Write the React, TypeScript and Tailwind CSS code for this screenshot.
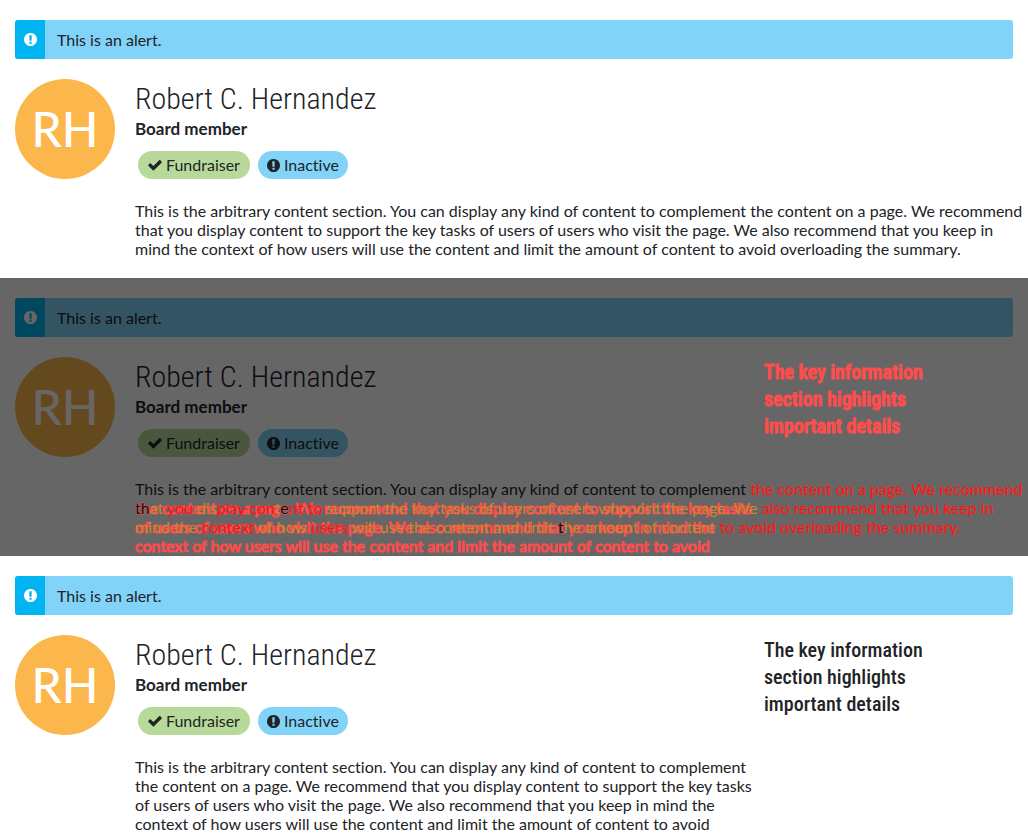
import type { ReactNode } from "react";

const wideLines = [
  "This is the arbitrary content section. You can display any kind of content to complement the content on a page. We recommend",
  "that you display content to support the key tasks of users of users who visit the page. We also recommend that you keep in",
  "mind the context of how users will use the content and limit the amount of content to avoid overloading the summary.",
];

const narrowLines = [
  "This is the arbitrary content section. You can display any kind of content to complement",
  "the content on a page. We recommend that you display content to support the key tasks",
  "of users of users who visit the page. We also recommend that you keep in mind the",
  "context of how users will use the content and limit the amount of content to avoid",
];

type Tone = "base" | "mixed" | "changed";
type Segment = [Tone, string];

const toneClass: Record<Tone, string> = {
  base: "text-[#0d0e10]",
  mixed: "text-[#d08530]",
  changed: "text-[#ee1414] [text-shadow:0_0_1px_#ff4d4d]",
};

const changedLines: Segment[][] = [
  [
    ["base", "This is the arbitrary content section. You can display any kind of content to complement "],
    ["changed", "the content on a page. We recommend"],
  ],
  [
    ["base", "th"],
    ["mixed", "at "],
    ["changed", "you "],
    ["mixed", "dis"],
    ["changed", "play con"],
    ["mixed", "t"],
    ["base", "e"],
    ["changed", "nt to "],
    ["mixed", "support the key tasks of users of users who visit the page. We"],
    ["changed", " also recommend that you keep in"],
  ],
  [
    ["mixed", "mind the "],
    ["changed", "context "],
    ["mixed", "of how "],
    ["changed", "users "],
    ["mixed", "will use the content and limit "],
    ["base", "t"],
    ["mixed", "he amount of content"],
    ["changed", " to avoid overloading the summary."],
  ],
];

function CheckIcon() {
  return (
    <svg viewBox="96 128 1600 1536" className="size-[14px]" fill="currentColor" aria-hidden="true">
      <path d="M1671 566q0 40-28 68l-724 724-136 136q-28 28-68 28t-68-28l-136-136-362-362q-28-28-28-68t28-68l136-136q28-28 68-28t68 28l294 295 656-657q28-28 68-28t68 28l136 136q28 28 28 68z" />
    </svg>
  );
}

function AlertIcon() {
  return (
    <svg viewBox="128 128 1536 1536" className="size-[13px]" fill="currentColor" aria-hidden="true">
      <path d="M896 128q209 0 385.500 103t279.500 279.500 103 385.500-103 385.500-279.500 279.500-385.500 103-385.500-103-279.500-279.500-103-385.500 103-385.500 279.500-279.500 385.500-103zm128 1247v-190q0-14-9-23.500t-22-9.500h-192q-13 0-23 10t-10 23v190q0 13 10 23t23 10h192q13 0 22-9.500t9-23.500zm-2-344l18-621q0-12-10-18-10-8-24-8h-220q-14 0-24 8-10 6-10 18l17 621q0 10 10 17.500t24 7.500h185q14 0 23.500-7.500t10.500-17.500z" />
    </svg>
  );
}

function Lines({ lines }: { lines: string[] }) {
  return (
    <p>
      {lines.map((line) => (
        <span key={line} className="block whitespace-nowrap">
          {line}{" "}
        </span>
      ))}
    </p>
  );
}

function KeyInfo({ changed = false }: { changed?: boolean }) {
  return (
    <aside className="relative z-10 w-[249px] shrink-0 pt-0.5">
      <p
        className={
          changed
            ? "max-w-44 font-['Roboto_Condensed','Liberation_Sans',sans-serif] text-xl leading-[27px] font-medium text-[#ff4d4d] [-webkit-text-stroke:1px_#ff4d4d]"
            : "max-w-44 font-['Roboto_Condensed','Liberation_Sans',sans-serif] text-xl leading-[27px] font-medium"
        }
      >
        The key information section highlights important details
      </p>
    </aside>
  );
}

function ChangedBody() {
  return (
    <div className="grid">
      <p className="col-start-1 row-start-1 pt-[19px] text-[#ff4d4d] [-webkit-text-stroke:1px_#ff4d4d]">
        {narrowLines.slice(1).map((line) => (
          <span key={line} className="block whitespace-nowrap">
            {line}
          </span>
        ))}
      </p>
      <p className="z-10 col-start-1 row-start-1">
        {changedLines.map((segments, row) => (
          <span key={row} className="block whitespace-nowrap">
            {segments.map(([tone, text], i) => (
              <span key={i} className={toneClass[tone]}>
                {text}
              </span>
            ))}
          </span>
        ))}
      </p>
    </div>
  );
}

interface SummaryProps {
  body: ReactNode;
  aside?: ReactNode;
  shaded?: boolean;
}

function Summary({ body, aside, shaded = false }: SummaryProps) {
  return (
    <section className={shaded ? "relative px-[15px] pt-5 pb-px" : aside ? "px-[15px] pt-5" : "px-[15px] pt-5 pb-5"}>
      {shaded && <div className="absolute inset-0 z-10 bg-black/60" />}
      <div role="status" className="mb-5 flex h-[39px] overflow-hidden rounded-[3px] bg-[#81d4f7]">
        <span className="flex w-[30px] items-center justify-center bg-[#00b4f1] text-white">
          <AlertIcon />
        </span>
        <span className="px-3 leading-[39px]">This is an alert.</span>
      </div>
      <div className="flex">
        <div className="flex min-w-0 flex-1 gap-5">
          <div className="flex size-[100px] shrink-0 items-center justify-center rounded-full bg-[#fbb74c] text-[48px] leading-none font-medium text-white">
            RH
          </div>
          <div className="min-w-0 flex-1">
            <h1 className="font-['Roboto_Condensed','Liberation_Sans',sans-serif] text-3xl leading-10 font-light">
              Robert C. Hernandez
            </h1>
            <h2 className="text-[17px] leading-5 font-bold">Board member</h2>
            <ul className="mt-3 ml-[3px] flex gap-2 leading-7">
              <li className="flex items-center gap-1 rounded-full bg-[#b7da9b] px-[10px]">
                <CheckIcon />
                Fundraiser
              </li>
              <li className="flex items-center gap-1 rounded-full bg-[#81d4f7] px-[9px]">
                <AlertIcon />
                Inactive
              </li>
            </ul>
            <div className="relative z-10 mt-[22px]">{body}</div>
          </div>
        </div>
        {aside}
      </div>
    </section>
  );
}

export default function App() {
  return (
    <main className="overflow-x-hidden bg-white font-['Lato','Liberation_Sans',sans-serif] text-base leading-[19px] text-[#212327] [font-variant-ligatures:none]">
      <Summary body={<Lines lines={wideLines} />} />
      <Summary shaded body={<ChangedBody />} aside={<KeyInfo changed />} />
      <Summary body={<Lines lines={narrowLines} />} aside={<KeyInfo />} />
    </main>
  );
}
